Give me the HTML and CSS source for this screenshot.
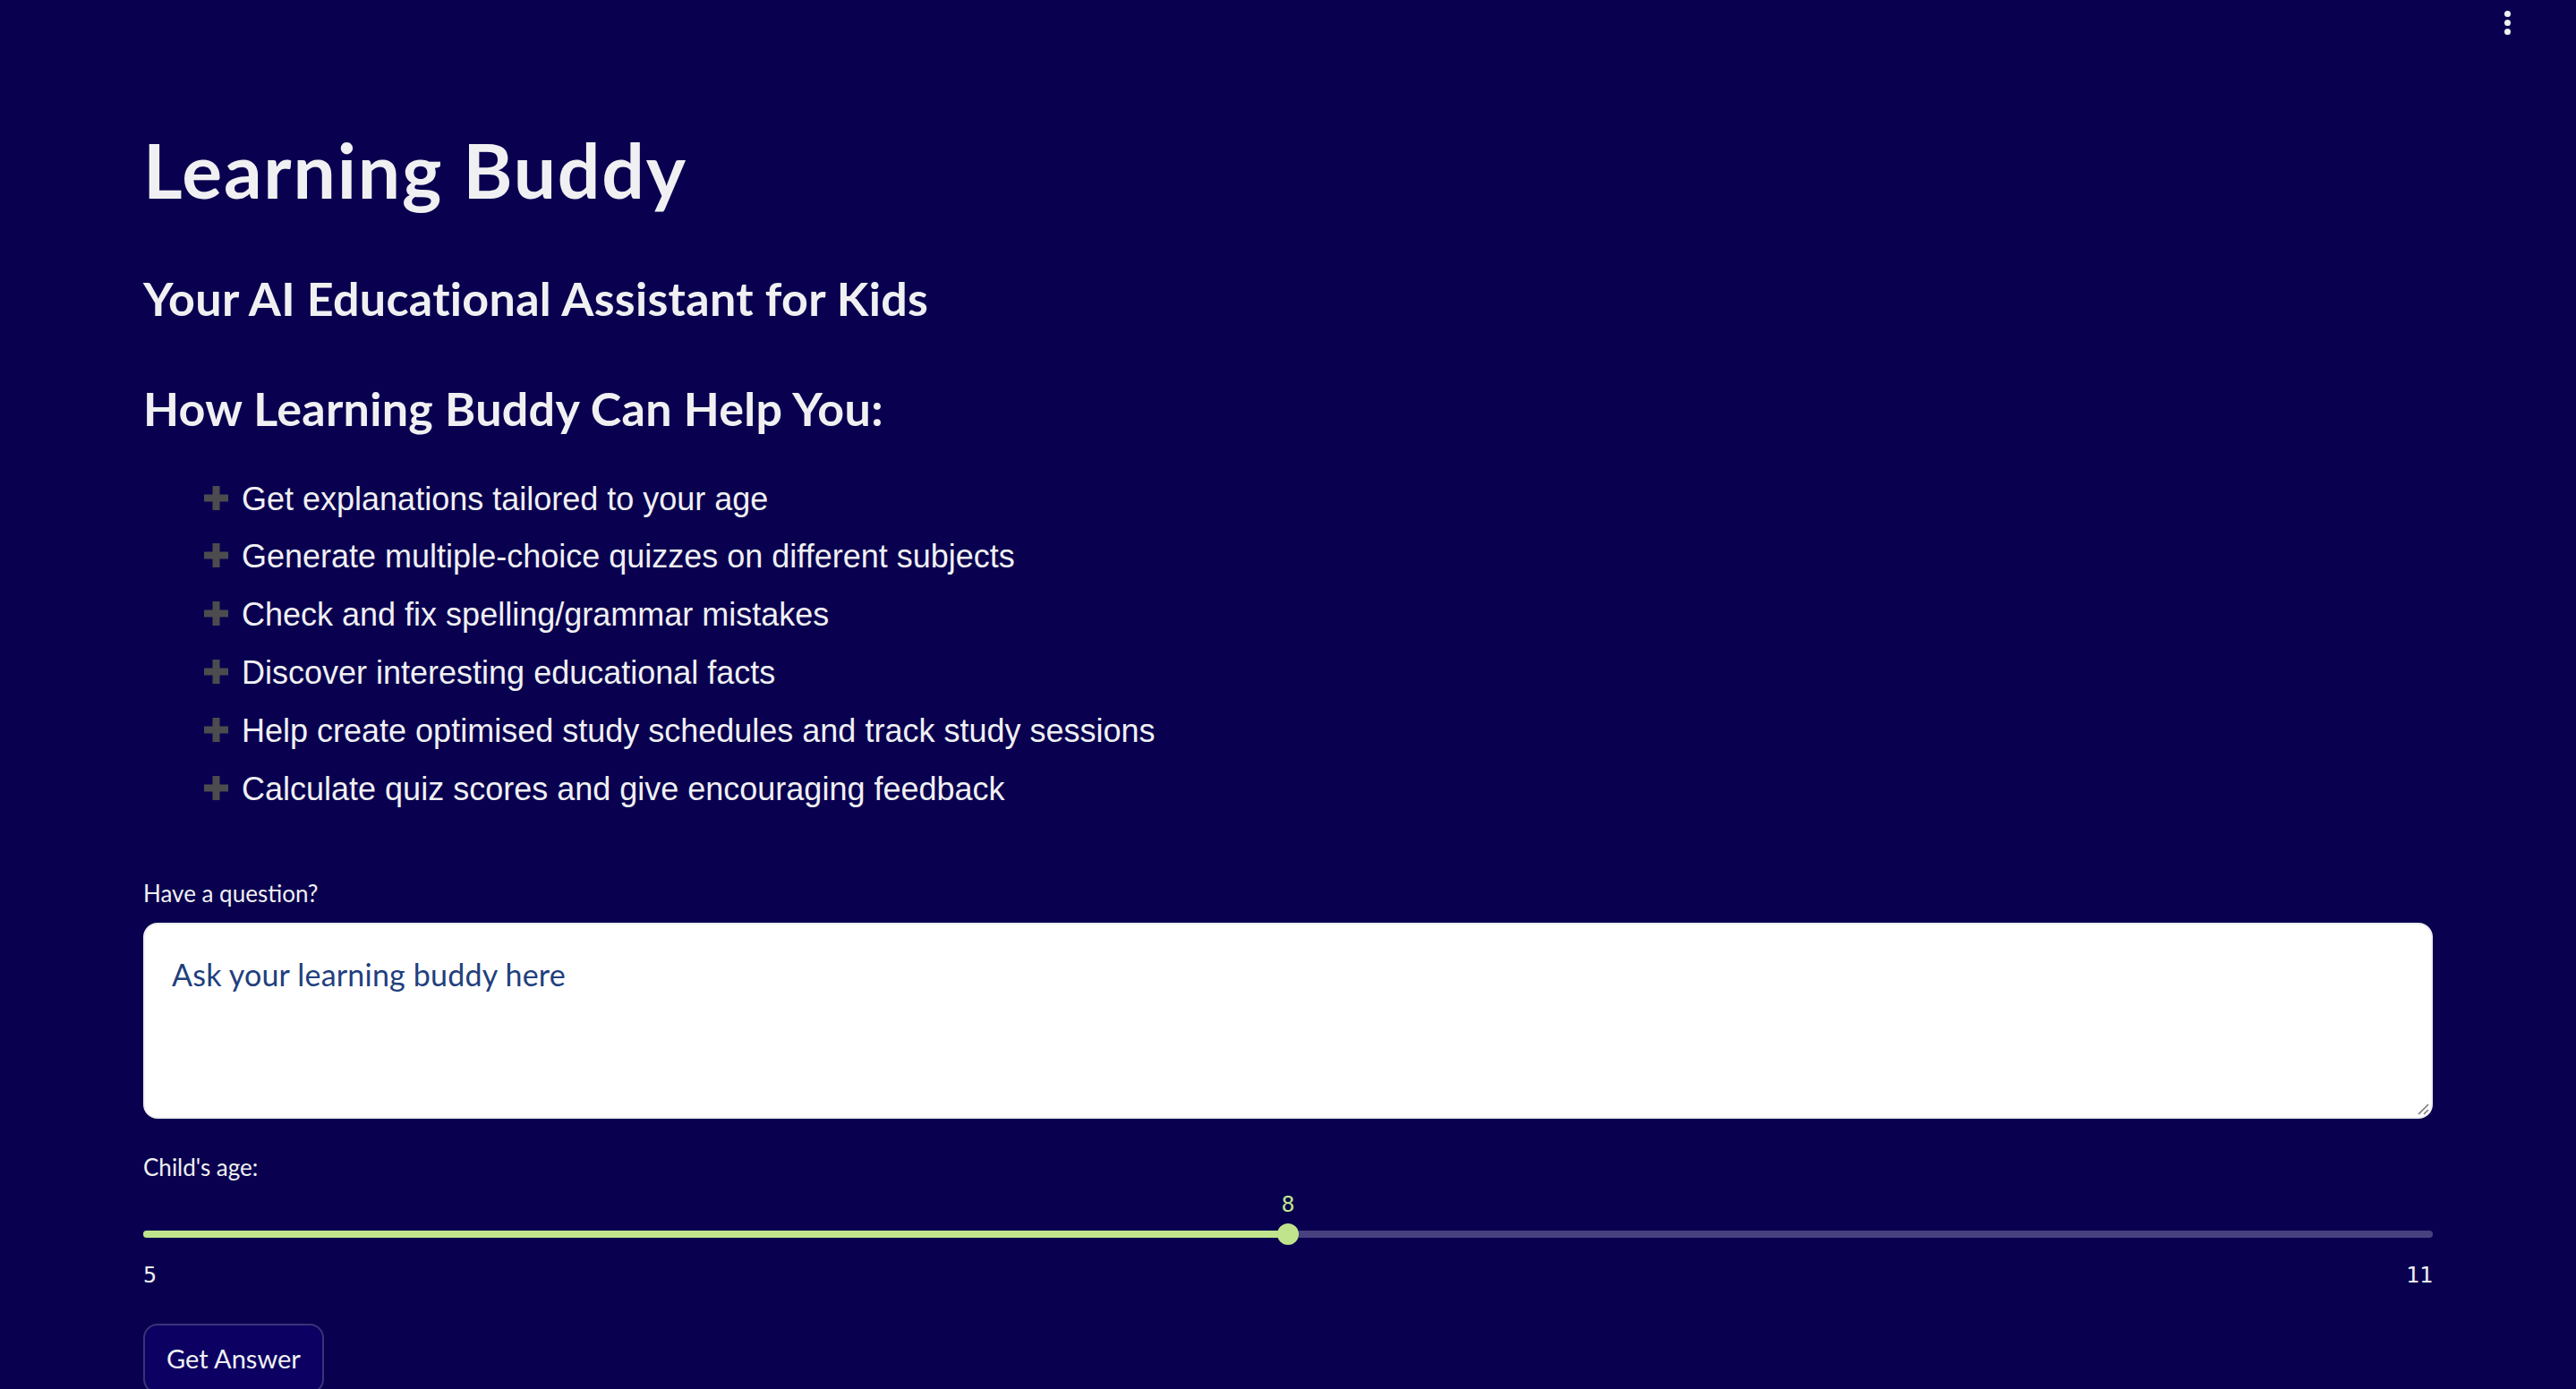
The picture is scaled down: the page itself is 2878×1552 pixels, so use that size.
FILE: index.html
```html
<!DOCTYPE html>
<html lang="en">
<head>
<meta charset="utf-8">
<title>Learning Buddy</title>
<link rel="stylesheet" href="styles.css">
</head>
<body>
<div class="menu" aria-label="Main menu">
  <span class="dot"></span><span class="dot"></span><span class="dot"></span>
</div>
<main class="app">
  <h1 class="title">Learning Buddy</h1>
  <h3 class="subtitle">Your AI Educational Assistant for Kids</h3>
  <h3 class="section">How Learning Buddy Can Help You:</h3>
  <ul class="features">
    <li><svg class="plus" viewBox="0 0 27 27"><rect x="9.5" y="0" width="8" height="27"/><rect x="0" y="9.5" width="27" height="8"/></svg><span>Get explanations tailored to your age</span></li>
    <li><svg class="plus" viewBox="0 0 27 27"><rect x="9.5" y="0" width="8" height="27"/><rect x="0" y="9.5" width="27" height="8"/></svg><span>Generate multiple-choice quizzes on different subjects</span></li>
    <li><svg class="plus" viewBox="0 0 27 27"><rect x="9.5" y="0" width="8" height="27"/><rect x="0" y="9.5" width="27" height="8"/></svg><span>Check and fix spelling/grammar mistakes</span></li>
    <li><svg class="plus" viewBox="0 0 27 27"><rect x="9.5" y="0" width="8" height="27"/><rect x="0" y="9.5" width="27" height="8"/></svg><span>Discover interesting educational facts</span></li>
    <li><svg class="plus" viewBox="0 0 27 27"><rect x="9.5" y="0" width="8" height="27"/><rect x="0" y="9.5" width="27" height="8"/></svg><span>Help create optimised study schedules and track study sessions</span></li>
    <li><svg class="plus" viewBox="0 0 27 27"><rect x="9.5" y="0" width="8" height="27"/><rect x="0" y="9.5" width="27" height="8"/></svg><span>Calculate quiz scores and give encouraging feedback</span></li>
  </ul>

  <label class="label q-label" for="question">Have a question?</label>
  <div class="question-wrap">
    <textarea id="question" class="question" placeholder="Ask your learning buddy here"></textarea>
    <svg class="grip" viewBox="0 0 16 16"><path d="M15 4 L4 15 M15 10 L10 15"/></svg>
  </div>

  <div class="label age-label">Child's age:</div>
  <div class="slider">
    <div class="value-row"><span class="value" style="left: 50%">8</span></div>
    <div class="track-row">
      <div class="track"><div class="fill" style="width: 50%"></div></div>
      <span class="thumb" style="left: 50%"></span>
    </div>
    <div class="ticks"><span>5</span><span>11</span></div>
  </div>

  <button class="btn" type="button">Get Answer</button>
</main>
</body>
</html>
```

FILE: styles.css
```css
html, body {
  margin: 0;
  padding: 0;
  background: #090050;
  color: #f0f0f2;
  font-family: Lato, "Open Sans", sans-serif;
}

body {
  min-height: 1552px;
  overflow: hidden;
}

.menu {
  position: absolute;
  top: 12px;
  right: 73px;
  display: flex;
  flex-direction: column;
  gap: 3px;
}

.dot {
  width: 7px;
  height: 7px;
  border-radius: 50%;
  background: #f0f0f2;
}

.app {
  padding: 140px 160px 0;
}

.title {
  margin: 0;
  font-size: 84px;
  font-weight: 700;
  letter-spacing: 1.8px;
  line-height: 1.2;
}

.subtitle,
.section {
  margin: 0;
  font-size: 52px;
  font-weight: 700;
  letter-spacing: 0.3px;
  line-height: 1.2;
}

.subtitle {
  margin-top: 61px;
}

.section {
  margin-top: 61px;
}

.features {
  list-style: none;
  margin: 38px 0 0;
  padding: 0 0 0 68px;
  font-family: "Liberation Sans", Arial, sans-serif;
  font-size: 36px;
  line-height: 64.8px;
}

.features li {
  display: flex;
  align-items: flex-start;
  gap: 15px;
}

.plus {
  flex: none;
  width: 27px;
  height: 27px;
  margin-top: 17px;
  fill: #4c4c4e;
}

.label {
  display: block;
  font-size: 26px;
  line-height: 1.2;
}

.q-label {
  margin-top: 69px;
}

.question-wrap {
  position: relative;
  margin-top: 16px;
}

.question {
  display: block;
  box-sizing: border-box;
  width: 100%;
  height: 219px;
  padding: 32px 30px 30px;
  border: 2px solid #eceef2;
  border-radius: 16px;
  background: #ffffff;
  color: #213f7d;
  font-family: Lato, "Open Sans", sans-serif;
  font-size: 34px;
  letter-spacing: 0.2px;
  line-height: 1.4;
  resize: none;
  outline: none;
}

.question::placeholder {
  color: #213f7d;
  opacity: 1;
}

.grip {
  position: absolute;
  right: 4px;
  bottom: 4px;
  width: 16px;
  height: 16px;
  stroke: #7a7a7a;
  stroke-width: 1.6;
  fill: none;
}

.age-label {
  margin-top: 39px;
}

.slider {
  margin-top: 11px;
  font-family: "DejaVu Sans Mono", "Liberation Mono", monospace;
  font-size: 25px;
  line-height: 30px;
}

.value-row {
  position: relative;
  height: 30px;
}

.value {
  position: absolute;
  top: 0;
  transform: translateX(-50%);
  color: #bfe48b;
}

.track-row {
  position: relative;
  height: 24px;
  margin-top: 6px;
  display: flex;
  align-items: center;
}

.track {
  width: 100%;
  height: 8px;
  border-radius: 4px;
  background: #48417f;
  overflow: hidden;
}

.fill {
  height: 100%;
  background: #bfe48b;
}

.thumb {
  position: absolute;
  top: 0;
  width: 24px;
  height: 24px;
  border-radius: 50%;
  background: #bfe48b;
  transform: translateX(-50%);
}

.ticks {
  display: flex;
  justify-content: space-between;
  margin-top: 19px;
  color: #f0f0f2;
}

.btn {
  display: block;
  margin-top: 39px;
  box-sizing: border-box;
  width: 202px;
  height: 78px;
  padding: 0 24px;
  border: 2px solid #3a3476;
  border-radius: 16px;
  background: #0c0062;
  color: #f0f0f2;
  font-family: Lato, "Open Sans", sans-serif;
  font-size: 29px;
  text-align: left;
}
```
